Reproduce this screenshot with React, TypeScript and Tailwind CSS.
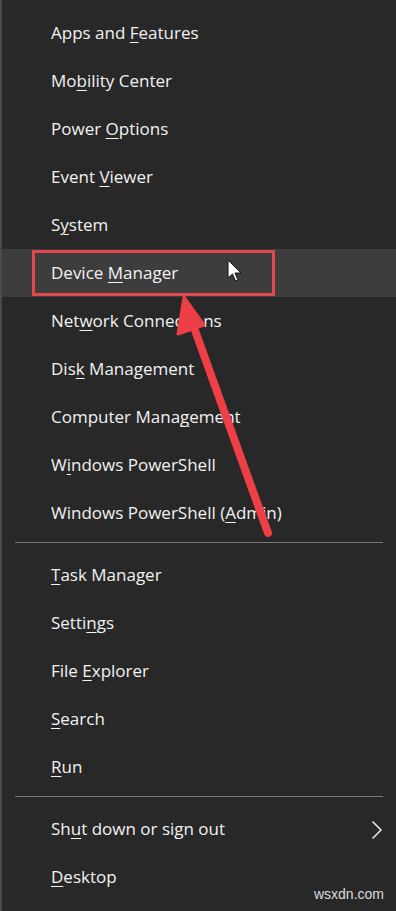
import type { ReactNode } from 'react';

type Item = { pre: string; key: string; post: string; active?: boolean; more?: boolean }

const groupA: Item[] = [
  { pre: 'Apps and ', key: 'F', post: 'eatures' },
  { pre: 'Mo', key: 'b', post: 'ility Center' },
  { pre: 'Power ', key: 'O', post: 'ptions' },
  { pre: 'Event ', key: 'V', post: 'iewer' },
  { pre: 'S', key: 'y', post: 'stem' },
  { pre: 'Device ', key: 'M', post: 'anager', active: true },
  { pre: 'Net', key: 'w', post: 'ork Connections' },
  { pre: 'Dis', key: 'k', post: ' Management' },
  { pre: 'Computer Mana', key: 'g', post: 'ement' },
  { pre: 'W', key: 'i', post: 'ndows PowerShell' },
  { pre: 'Windows PowerShell (', key: 'A', post: 'dmin)' },
]

const groupB: Item[] = [
  { pre: '', key: 'T', post: 'ask Manager' },
  { pre: 'Setti', key: 'n', post: 'gs' },
  { pre: 'File ', key: 'E', post: 'xplorer' },
  { pre: '', key: 'S', post: 'earch' },
  { pre: '', key: 'R', post: 'un' },
]

const groupC: Item[] = [
  { pre: 'Sh', key: 'u', post: 't down or sign out', more: true },
  { pre: '', key: 'D', post: 'esktop' },
]

const Row = ({ item }: { item: Item }) => (
  <div className={`relative flex h-12 items-center pl-[49px] pr-3 ${item.active ? 'bg-[#3d3d3d]' : ''}`}>
    <span>
      {item.pre}
      <span className="underline decoration-1 underline-offset-[3px]">{item.key}</span>
      {item.post}
    </span>
    {item.more && (
      <svg className="absolute right-[13px] top-[15px]" width="12" height="20" viewBox="0 0 12 20" fill="none">
        <path d="M1.5 1.5 L10 10 L1.5 18.5" stroke="#e8e8e8" strokeWidth="1.5" />
      </svg>
    )}
  </div>
)

const Sep = () => <div className="mx-[13px] mt-[5px] mb-[8px] h-px bg-[#7a7a7a]" />

const Group = ({ items }: { items: Item[] }): ReactNode => (
  <>
    {items.map((it) => <Row key={it.pre + it.key} item={it} />)}
  </>
)

export default function App() {
  return (
    <div
      className="relative h-[911px] w-[396px] overflow-hidden border-l-2 border-[#4a4a4a] bg-[#282828] pt-[9px] text-[17px] text-[#f2f2f2]"
      style={{ fontFamily: '"Open Sans", "Noto Sans", sans-serif' }}
    >
      <Group items={groupA} />
      <Sep />
      <Group items={groupB} />
      <Sep />
      <Group items={groupC} />

      {/* annotation box */}
      <div className="absolute left-[30px] top-[250px] h-[46px] w-[243px] border-[3px] border-[#e2484d]" />

      {/* annotation arrow + cursor */}
      <svg className="absolute left-0 top-0" width="396" height="911" viewBox="0 0 396 911">
        <line x1="190" y1="322" x2="266" y2="533" stroke="#ee3f47" strokeWidth="8" strokeLinecap="round" />
        <polygon points="182,297 176,334 202,325" fill="#ee3f47" stroke="#ee3f47" strokeWidth="3" strokeLinejoin="round" />
        <path d="M226 260 L226 278 L230.5 274 L233.5 281 L236 280 L233 273 L239 273 Z" fill="#ffffff" stroke="#111" strokeWidth="1" strokeLinejoin="round" />
      </svg>

      <div className="absolute bottom-[6px] right-[12px] text-[14px] text-[#dcdcdc]" style={{ fontFamily: '"Liberation Sans", sans-serif' }}>
        wsxdn.com
      </div>
    </div>
  )
}
